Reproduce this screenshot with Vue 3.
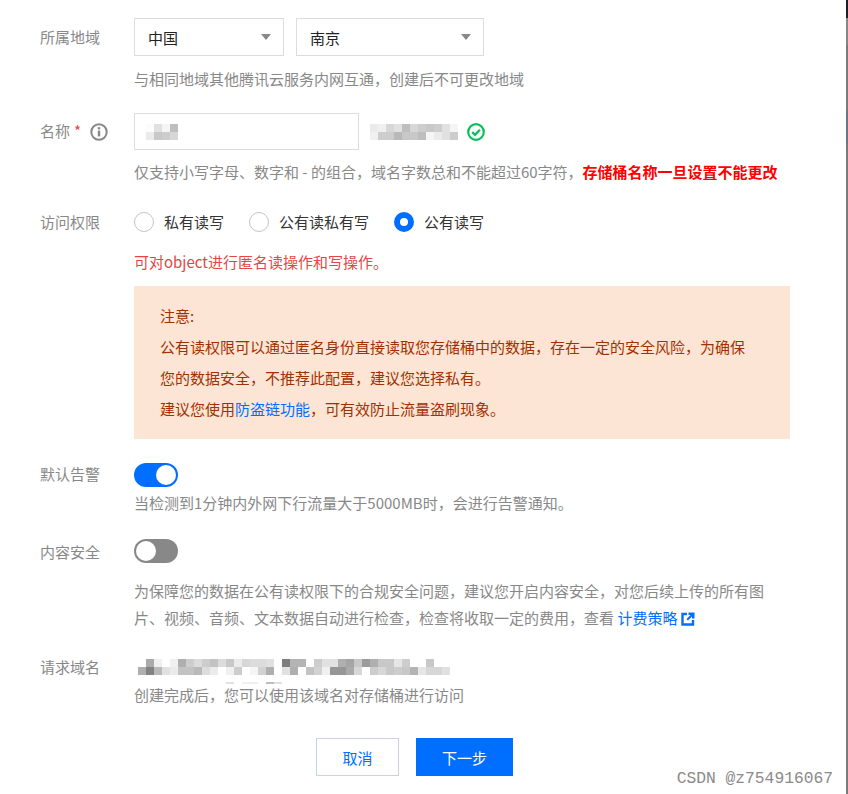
<script setup>
const row = (x, y, w, h, vals) => vals.map((v, i) => ({ x: x + i * w, y, w, h, c: `rgb(${v},${v},${v})` }))
const nameBlur = [
  ...row(146, 124, 8, 8, [252, 225, 245, 190]),
  ...row(146, 132, 8, 8, [235, 200, 205, 215]),
]
const hostBlur = [
  ...row(370, 124, 8, 8, [235, 240, 215, 225, 190, 215, 205, 200, 205, 225, 245]),
  ...row(370, 132, 8, 8, [240, 205, 205, 185, 200, 200, 190, 245, 235, 225, 205]),
]
const domainBlur = [
  ...row(146, 660, 8, 8, [170, 240, 255, 240, 175, 205, 220, 205, 195, 220, 200, 235, 215, 220, 220, 225, 255, 125, 180, 180, 255, 205, 225, 225, 175, 165, 200, 155, 175, 200, 200, 230, 205, 255, 255, 200]),
  ...row(138, 668, 8, 8, [175, 130, 185, 225, 235, 195, 195, 185, 220, 235, 255, 240, 205, 255, 245, 210, 175, 255, 225, 175, 255, 195, 210, 240, 150, 150, 170, 215, 255, 205, 215, 200, 205, 200, 180, 230, 215, 215, 225]),
  ...row(226, 683, 8, 2, [225, 255, 240, 240, 255, 190, 225]),
]
</script>

<template>
  <div class="page">
    <div class="form">
      <div class="field f-region">
        <div class="label">所属地域</div>
        <div class="body">
          <div class="selects">
            <div class="select s1"><span>中国</span><i class="caret"></i></div>
            <div class="select s2"><span>南京</span><i class="caret"></i></div>
          </div>
          <p class="hint h-region">与相同地域其他腾讯云服务内网互通，创建后不可更改地域</p>
        </div>
      </div>

      <div class="field f-name">
        <div class="label">
          名称<span class="star">*</span>
          <svg class="info" width="18" height="18" viewBox="0 0 18 18">
            <circle cx="9" cy="9" r="7.700" fill="none" stroke="#888" stroke-width="2" />
            <rect x="7.800" y="7.600" width="2.400" height="5.800" fill="#888" />
            <rect x="7.800" y="4.200" width="2.400" height="2.300" fill="#888" />
          </svg>
        </div>
        <div class="body">
          <div class="name-row">
            <div class="input">
              <svg class="mosaic" width="32" height="16" viewBox="146 124 32 16">
                <rect v-for="(r, i) in nameBlur" :key="i" :x="r.x" :y="r.y" :width="r.w" :height="r.h" :fill="r.c" />
              </svg>
            </div>
            <svg class="mosaic host" width="88" height="16" viewBox="370 124 88 16">
              <rect v-for="(r, i) in hostBlur" :key="i" :x="r.x" :y="r.y" :width="r.w" :height="r.h" :fill="r.c" />
            </svg>
            <svg class="ok" width="18" height="18" viewBox="0 0 18 18">
              <circle cx="9" cy="9" r="7.800" fill="none" stroke="#0abf5b" stroke-width="2.200" />
              <path d="M5.200 9.200 8 11.900 12.900 6.800" fill="none" stroke="#0abf5b" stroke-width="2.300" />
            </svg>
          </div>
          <p class="hint h-name">仅支持小写字母、数字和 - 的组合，域名字数总和不能超过60字符，<b class="danger">存储桶名称一旦设置不能更改</b></p>
        </div>
      </div>

      <div class="field f-access">
        <div class="label">访问权限</div>
        <div class="body">
          <div class="radios">
            <label class="radio"><i class="dot"></i>私有读写</label>
            <label class="radio"><i class="dot"></i>公有读私有写</label>
            <label class="radio"><i class="dot on"></i>公有读写</label>
          </div>
          <p class="warn-line">可对object进行匿名读操作和写操作。</p>
          <div class="notice">
            <p>注意:</p>
            <p>公有读权限可以通过匿名身份直接读取您存储桶中的数据，存在一定的安全风险，为确保</p>
            <p>您的数据安全，不推荐此配置，建议您选择私有。</p>
            <p>建议您使用<a>防盗链功能</a>，可有效防止流量盗刷现象。</p>
          </div>
        </div>
      </div>

      <div class="field f-alarm">
        <div class="label">默认告警</div>
        <div class="body">
          <div class="switch on"><i></i></div>
          <p class="hint h-alarm">当检测到1分钟内外网下行流量大于5000MB时，会进行告警通知。</p>
        </div>
      </div>

      <div class="field f-safe">
        <div class="label">内容安全</div>
        <div class="body">
          <div class="switch"><i></i></div>
          <p class="hint h-safe">为保障您的数据在公有读权限下的合规安全问题，建议您开启内容安全，对您后续上传的所有图<br />片、视频、音频、文本数据自动进行检查，检查将收取一定的费用，查看 <a class="link">计费策略</a>
            <svg class="ext" width="14" height="14" viewBox="0 0 14 14">
              <path d="M6 2H1.500v10.500H12V8" fill="none" stroke="#006eff" stroke-width="2.400" />
              <path d="M7.500 .5H13.500V6.500H11V4.500L7 8.500 5.500 7 9.500 3H7.500z" fill="#006eff" />
            </svg>
          </p>
        </div>
      </div>

      <div class="field f-domain">
        <div class="label">请求域名</div>
        <div class="body">
          <svg class="mosaic domain" width="320" height="25" viewBox="130 660 320 25">
            <rect v-for="(r, i) in domainBlur" :key="i" :x="r.x" :y="r.y" :width="r.w" :height="r.h" :fill="r.c" />
          </svg>
          <p class="hint h-domain">创建完成后，您可以使用该域名对存储桶进行访问</p>
        </div>
      </div>

      <div class="actions">
        <button class="btn ghost">取消</button>
        <button class="btn primary">下一步</button>
      </div>
    </div>
    <div class="mark">CSDN @z754916067</div>
  </div>
</template>

<style scoped>
.page {
  position: relative;
  width: 848px;
  height: 794px;
  background: #fff;
  overflow: hidden;
  font-family: "Noto Sans CJK SC", "Liberation Sans", sans-serif;
  font-size: 15px;
  color: #333;
}
.page::after {
  content: "";
  position: absolute;
  right: 0;
  top: 0;
  width: 2px;
  height: 794px;
  background: linear-gradient(
    to bottom,
    #1c2026 0,
    #1c2026 18px,
    #888 18px,
    #858585 45px,
    #7a7a7a 45px,
    #7a7a7a 110px,
    #6c7685 110px,
    #6c7685 145px,
    #7a7a7a 145px,
    #7a7a7a 100%
  );
}
.form { padding: 18px 0 0 40px; }
.field { display: flex; }
.label {
  width: 94px;
  flex: none;
  color: #888;
  font-size: 15px;
  line-height: 20px;
  display: flex;
  align-items: center;
  height: 20px;
  margin-top: 9px;
}
.star { color: #e54545; margin-left: 4px; }
.info { margin-left: 9px; margin-top: 2px; }
.body { flex: 1; min-width: 0; }
p { margin: 0; }
.hint { color: #888; font-size: 15px; line-height: 22px; }
.selects { display: flex; gap: 12px; }
.select {
  box-sizing: border-box;
  height: 38px;
  border: 1px solid #dcdcdc;
  display: flex;
  align-items: center;
  justify-content: space-between;
  padding: 0 12px 0 13px;
  color: #222;
}
.s1 { width: 150px; }
.s2 { width: 188px; }
.caret {
  width: 0;
  height: 0;
  border-left: 5px solid transparent;
  border-right: 5px solid transparent;
  border-top: 6px solid #888;
  margin-top: -1px;
}
.h-region { margin-top: 12px; }
.f-name { margin-top: 23px; }
.f-name .label { margin-top: 0; height: 36px; }
.name-row { display: flex; align-items: center; height: 38px; }
.input {
  box-sizing: border-box;
  align-self: flex-start;
  width: 225px;
  height: 37px;
  border: 1px solid #dcdcdc;
  padding: 10px 0 0 11px;
}
.mosaic { display: block; }
.host { margin-left: 11px; }
.ok { margin-left: 9px; }
.h-name { margin-top: 10px; }
.danger { color: #f00; font-weight: 700; }
.f-access { margin-top: 25px; }
.f-access .label { margin-top: 4px; }
.radios { display: flex; height: 28px; align-items: center; gap: 25px; color: #333; }
.radio { display: flex; align-items: center; gap: 10px; line-height: 20px; }
.dot {
  box-sizing: border-box;
  width: 20px;
  height: 20px;
  border-radius: 50%;
  border: 1px solid #c4c4c4;
  background: #fff;
}
.dot.on { border: 6px solid #006eff; }
.warn-line { color: #e54545; margin-top: 15px; line-height: 22px; }
.notice {
  box-sizing: border-box;
  width: 656px;
  height: 153px;
  margin-top: 13px;
  padding: 14px 26px 0;
  background: #fde5d5;
  color: #a33000;
  line-height: 31px;
}
.notice a { color: #006eff; }
.f-alarm { margin-top: 24px; }
.f-alarm .label { margin-top: -1px; height: 24px; }
.switch {
  position: relative;
  width: 44px;
  height: 24px;
  border-radius: 12px;
  background: #888;
}
.switch i {
  position: absolute;
  left: 2px;
  top: 2px;
  width: 20px;
  height: 20px;
  border-radius: 50%;
  background: #fff;
}
.switch.on { background: #006eff; }
.switch.on i { left: 22px; }
.h-alarm { margin-top: 5px; }
.f-safe { margin-top: 25px; }
.f-safe .label { margin-top: 1px; height: 24px; }
.h-safe { margin-top: 14px; line-height: 27px; }
.link { color: #006eff; }
.ext { vertical-align: -2px; margin-left: 4px; }
.f-domain { margin-top: 26px; }
.f-domain .label { margin-top: 0; }
.domain { margin: 2px 0 0 -4px; }
.h-domain { margin-top: 0; }
.actions { display: flex; gap: 17px; margin: 32px 0 0 276px; }
.btn {
  box-sizing: border-box;
  height: 38px;
  font: inherit;
  border-radius: 0;
  padding: 0;
}
.ghost { width: 83px; background: #fff; color: #006eff; border: 1px solid #ccd3e0; }
.primary { width: 97px; background: #006eff; color: #fff; border: 0; }
.mark {
  position: absolute;
  right: 15px;
  bottom: 5px;
  font-family: "Liberation Mono", monospace;
  font-size: 16.3px;
  line-height: 20px;
  color: #8a8a8a;
}
</style>
